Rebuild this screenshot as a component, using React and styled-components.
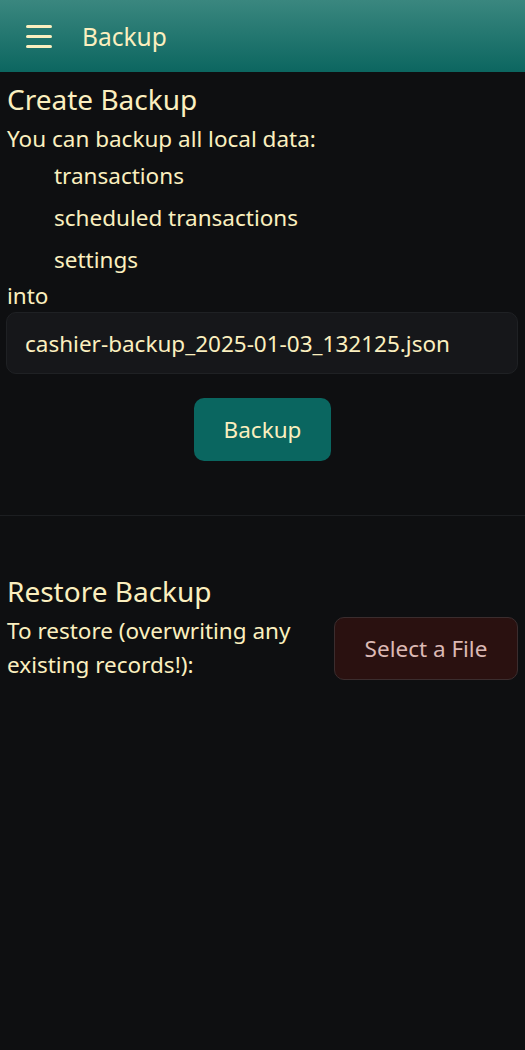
import React from 'react'
import styled, { createGlobalStyle } from 'styled-components'

const GlobalStyle = createGlobalStyle`
    html, body {
        margin: 0;
        padding: 0;
        background: #0e0f11;
    }
    body {
        font-family: "Noto Sans", "Open Sans", sans-serif;
        color: #fbefbf;
    }
`

const Page = styled.div`
    min-height: 1050px;
    background: #0e0f11;
`

const Header = styled.header`
    height: 72px;
    display: flex;
    align-items: center;
    padding-left: 26px;
    gap: 30px;
    background: linear-gradient(180deg, #3a877f 0%, #0c6660 100%);
`

const MenuButton = styled.div`
    width: 26px;
    display: flex;
    flex-direction: column;
    gap: 7px;

    span {
        display: block;
        height: 3px;
        border-radius: 2px;
        background: #fbefbf;
    }
`

const Title = styled.h1`
    margin: 0;
    font-size: 24.5px;
    font-weight: 400;
    color: #fbefbf;
`

const Section = styled.section`
    padding: ${p => p.$top}px 7px 0 7px;
`

const Heading = styled.h2`
    margin: 0 0 5px;
    font-size: 28px;
    font-weight: 400;
    line-height: 36px;
`

const Text = styled.p`
    margin: 0;
    font-size: 22.5px;
    line-height: 34px;
`

const List = styled.ul`
    list-style: none;
    margin: -1px 0 -2px;
    padding: 0 0 0 47px;

    li {
        font-size: 22.5px;
        line-height: 42px;
    }
`

const FileName = styled.div`
    margin: -1px 0 0 -1px;
    height: 60px;
    display: flex;
    align-items: center;
    padding-left: 18px;
    background: #16171a;
    border: 1px solid #1f2124;
    border-radius: 10px;
    font-size: 22.5px;
`

const Actions = styled.div`
    display: flex;
    justify-content: center;
    padding: 24px 0 54px;
`

const PrimaryButton = styled.button`
    width: 137px;
    height: 63px;
    border: none;
    border-radius: 10px;
    background: #0a6660;
    color: #fbefbf;
    font-family: inherit;
    font-size: 22.5px;
`

const Divider = styled.hr`
    margin: 0;
    border: none;
    height: 1px;
    background: #1c1e21;
`

const RestoreRow = styled.div`
    display: flex;
    align-items: flex-start;
    justify-content: space-between;
    gap: 16px;
`

const RestoreText = styled(Text)`
    max-width: 310px;
`

const DangerButton = styled.button`
    width: 184px;
    height: 63px;
    margin-top: 3px;
    flex-shrink: 0;
    border: 1px solid #3b2d2e;
    border-radius: 10px;
    background: #2a1110;
    color: #dcb9b4;
    font-family: inherit;
    font-size: 22.5px;
`

export default function App() {
    return (
        <Page>
            <GlobalStyle/>
            <Header>
                <MenuButton>
                    <span/>
                    <span/>
                    <span/>
                </MenuButton>
                <Title>Backup</Title>
            </Header>
            <Section $top={9}>
                <Heading>Create Backup</Heading>
                <Text>You can backup all local data:</Text>
                <List>
                    <li>transactions</li>
                    <li>scheduled transactions</li>
                    <li>settings</li>
                </List>
                <Text>into</Text>
                <FileName>cashier-backup_2025-01-03_132125.json</FileName>
                <Actions>
                    <PrimaryButton>Backup</PrimaryButton>
                </Actions>
            </Section>
            <Divider/>
            <Section $top={57}>
                <Heading>Restore Backup</Heading>
                <RestoreRow>
                    <RestoreText>To restore (overwriting any existing records!):</RestoreText>
                    <DangerButton>Select a File</DangerButton>
                </RestoreRow>
            </Section>
        </Page>
    )
}
